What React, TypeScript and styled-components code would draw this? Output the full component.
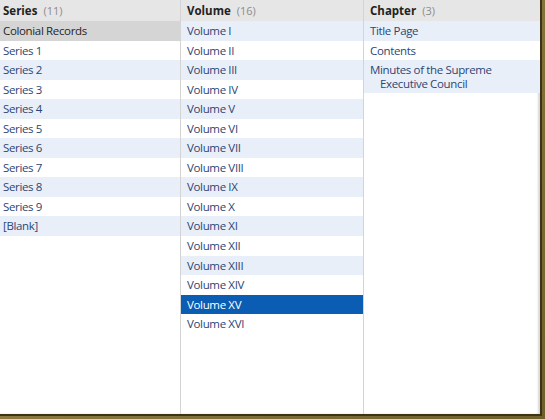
import React, { useState } from 'react';
import styled, { createGlobalStyle } from 'styled-components';

interface Item {
  id: string;
  label: string;
}

interface ColumnData {
  title: string;
  items: Item[];
  width: number;
  pad: number;
}

const romans = [
  'I', 'II', 'III', 'IV', 'V', 'VI', 'VII', 'VIII',
  'IX', 'X', 'XI', 'XII', 'XIII', 'XIV', 'XV', 'XVI',
];

const series: Item[] = [
  { id: 'colonial', label: 'Colonial Records' },
  ...[1, 2, 3, 4, 5, 6, 7, 8, 9].map(n => ({ id: `s${n}`, label: `Series ${n}` })),
  { id: 'blank', label: '[Blank]' },
];

const volumes: Item[] = romans.map(r => ({ id: `v${r}`, label: `Volume ${r}` }));

const chapters: Item[] = [
  { id: 'title', label: 'Title Page' },
  { id: 'contents', label: 'Contents' },
  { id: 'minutes', label: 'Minutes of the Supreme Executive Council' },
];

const App = () => {
  const [seriesId, setSeriesId] = useState('colonial');
  const [volumeId, setVolumeId] = useState('vXV');
  const [chapterId, setChapterId] = useState<string | null>(null);

  const columns: (ColumnData & {
    selected: string | null;
    active: boolean;
    onSelect: (id: string) => void;
  })[] = [
    {
      title: 'Series',
      items: series,
      width: 181,
      pad: 3,
      selected: seriesId,
      active: false,
      onSelect: setSeriesId,
    },
    {
      title: 'Volume',
      items: volumes,
      width: 183,
      pad: 6,
      selected: volumeId,
      active: true,
      onSelect: setVolumeId,
    },
    {
      title: 'Chapter',
      items: chapters,
      width: 176,
      pad: 6,
      selected: chapterId,
      active: true,
      onSelect: setChapterId,
    },
  ];

  return (
    <>
      <GlobalStyle />
      <Frame>
        <Browser>
          {columns.map((col, ci) => (
            <Column key={col.title} $width={col.width} $last={ci === columns.length - 1}>
              <Header $pad={col.pad}>
                <Title>{col.title}</Title>
                <Count>({col.items.length})</Count>
              </Header>
              <List>
                {col.items.map((item, i) => {
                  const isSel = col.selected === item.id;
                  return (
                    <Row
                      key={item.id}
                      $pad={col.pad}
                      $even={i % 2 === 0}
                      $state={isSel ? (col.active ? 'active' : 'inactive') : 'none'}
                      onClick={() => col.onSelect(item.id)}
                    >
                      {item.label}
                    </Row>
                  );
                })}
              </List>
            </Column>
          ))}
        </Browser>
      </Frame>
    </>
  );
};

const GlobalStyle = createGlobalStyle`
  html, body {
    margin: 0;
    padding: 0;
    background: #fff;
  }
  body {
    font-family: 'Open Sans', 'Liberation Sans', sans-serif;
  }
`;

const Frame = styled.div`
  width: 545px;
  height: 419px;
  box-sizing: border-box;
  padding: 0 3px 3px 0;
  background: linear-gradient(135deg, #a08c50, #6f5f2c);
`;

const Browser = styled.div`
  display: flex;
  width: 542px;
  height: 416px;
  box-sizing: border-box;
  background: #fff;
  border-right: 2px solid #3e3413;
  border-bottom: 2px solid #3e3413;
  box-shadow: inset -3px -1px 2px -1px #d8d8d8;
  overflow: hidden;
`;

const Column = styled.div<{ $width: number; $last: boolean }>`
  display: flex;
  flex-direction: column;
  width: ${p => p.$width}px;
  flex: ${p => (p.$last ? '1 1 auto' : '0 0 auto')};
  border-right: ${p => (p.$last ? 'none' : '1px solid #d4d4d4')};
  box-sizing: border-box;
`;

const Header = styled.div<{ $pad: number }>`
  display: flex;
  align-items: center;
  gap: 6px;
  height: 21px;
  padding-left: ${p => p.$pad}px;
  background: #e6e6e6;
  box-sizing: border-box;
`;

const Title = styled.span`
  font-weight: 700;
  font-size: 11.5px;
  color: #222;
`;

const Count = styled.span`
  font-size: 11px;
  color: #8c8c8c;
`;

const List = styled.div`
  display: flex;
  flex-direction: column;
`;

const Row = styled.div<{
  $pad: number;
  $even: boolean;
  $state: 'active' | 'inactive' | 'none';
}>`
  min-height: 19.55px;
  box-sizing: border-box;
  padding: 3px 4px 3px ${p => p.$pad + 10}px;
  text-indent: -10px;
  font-size: 11.5px;
  letter-spacing: -0.35px;
  line-height: 13.5px;
  cursor: default;
  color: ${p =>
    p.$state === 'active' ? '#fff' : p.$state === 'inactive' ? '#262626' : '#2c4574'};
  background: ${p =>
    p.$state === 'active'
      ? '#0a5db3'
      : p.$state === 'inactive'
      ? '#d5d5d5'
      : p.$even
      ? '#e9eff8'
      : '#fff'};
`;

export default App;
